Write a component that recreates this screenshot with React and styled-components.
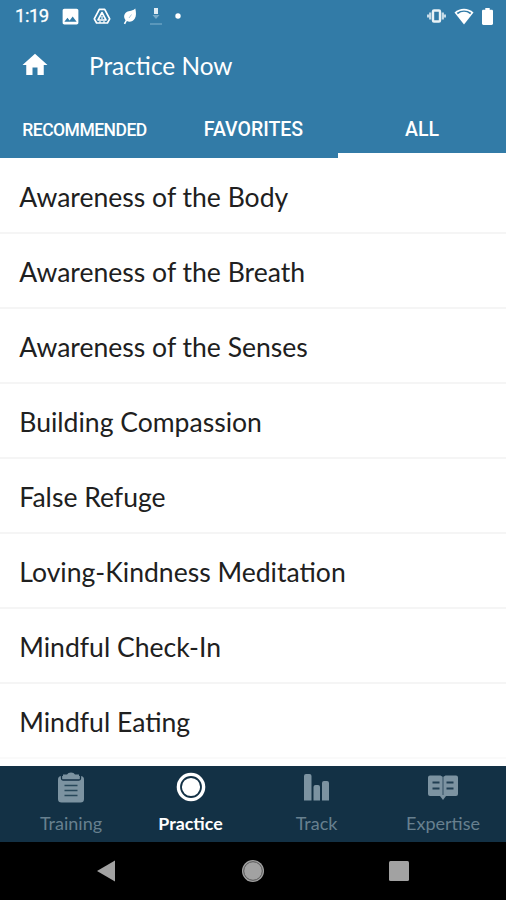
import React, { useState } from 'react';
import styled, { createGlobalStyle } from 'styled-components';
import { MdHome, MdImage, MdBatteryFull } from 'react-icons/md';

const GlobalStyle = createGlobalStyle`
  * {
    box-sizing: border-box;
  }
  body {
    margin: 0;
    font-family: Lato, 'Open Sans', sans-serif;
  }
`;

const Screen = styled.div`
  display: flex;
  flex-direction: column;
  width: 506px;
  height: 900px;
  overflow: hidden;
  background: #fff;
`;

const Header = styled.header`
  flex: none;
  height: 158px;
  background: #327ba7;
  color: #fff;
`;

const StatusBar = styled.div`
  display: flex;
  align-items: center;
  justify-content: space-between;
  height: 32px;
  padding: 0 13px 0 15px;
`;

const StatusGroup = styled.div`
  display: flex;
  align-items: center;
  gap: ${({ gap }) => gap || 0}px;

  svg {
    display: block;
  }
`;

const Clock = styled.span`
  width: 45px;
  font: 400 18.5px Roboto, sans-serif;
  letter-spacing: -0.5px;
  -webkit-text-stroke: 0.3px #fff;
`;

const TitleBar = styled.div`
  display: flex;
  align-items: center;
  height: 68px;
  padding-left: 20px;

  svg {
    display: block;
    margin-top: -3px;
  }
`;

const Title = styled.h1`
  margin: -1px 0 0 39px;
  font-size: 24.4px;
  font-weight: 400;
  line-height: 30px;
`;

const Tabs = styled.nav`
  display: grid;
  grid-template-columns: 169px 169px 168px;
  height: 58px;
`;

const Tab = styled.button`
  padding: 6px 0 0;
  border: 0;
  border-bottom: 5px solid ${({ active }) => (active ? '#fff' : 'transparent')};
  background: none;
  color: #fff;
  font: 500 ${({ size }) => size}px Roboto, sans-serif;
  letter-spacing: ${({ spacing }) => spacing || 0}px;
`;

const List = styled.ul`
  flex: 1;
  min-height: 0;
  margin: 0;
  padding: 1px 0 0;
  overflow: hidden;
  list-style: none;
`;

const Row = styled.li`
  display: flex;
  align-items: center;
  height: 74.95px;
  padding: 3px 0 0 19.3px;
  border-bottom: 2px solid #f5f5f5;
  color: #202020;
  font-size: 26.55px;
  font-weight: 400;

  &:last-child {
    border-bottom-color: #fafafa;
  }
`;

const BottomNav = styled.nav`
  flex: none;
  display: grid;
  grid-template-columns: 134px 119px 127px 126px;
  height: 76px;
  background: #133145;
`;

const NavItem = styled.button`
  display: flex;
  flex-direction: column;
  align-items: center;
  padding: 6px ${({ right }) => right || 0}px 0 ${({ left }) => left || 0}px;
  border: 0;
  background: none;
  color: ${({ active }) => (active ? '#fff' : '#67808f')};
  font-family: inherit;
  font-size: ${({ active }) => (active ? 17.8 : 18)}px;
  font-weight: ${({ active }) => (active ? 700 : 400)};
  line-height: 22px;

  svg {
    display: block;
    margin-bottom: 9px;
  }
`;

const SystemNav = styled.div`
  flex: none;
  display: flex;
  align-items: center;
  justify-content: space-between;
  height: 58px;
  padding: 0 97px 0 96px;
  background: #000;

  svg {
    display: block;
  }
`;

const DriveIcon = () => (
  <svg width="18" height="17" viewBox="0 0 18 17" fill="none" stroke="#fff" strokeLinejoin="round">
    <path d="M6.3 1.4h5.4l5 9.4-2.3 4.2H3.6L1.3 10.8z" strokeWidth="1.7" />
    <path d="M9 4.5l4 7.5H5z" strokeWidth="1.6" />
    <path d="M9 8v3M7 13v2M11 13v2" strokeWidth="1.2" />
  </svg>
);

const LeafIcon = () => (
  <svg width="14" height="17" viewBox="0 0 14 17">
    <path d="M12.3.5c.8 3.5 1.3 7.5-.6 10.3-1.8 2.7-5 3.5-7.8 2.3L2.2 16.2.8 15.5l1.8-3.3C.3 9.3.8 6 3.7 4.1 6.3 2.5 10 3 12.3.5z" fill="#fff" />
    <path d="M6 10L8.5 6.5" stroke="#8fb8d0" strokeWidth="0.8" />
  </svg>
);

const DownloadIcon = () => (
  <svg width="14" height="17" viewBox="0 0 14 17">
    <path d="M5 0h4v6H5z" fill="#e1edf4" />
    <path d="M3.5 7h7L7 11z" fill="#78aac8" />
    <path d="M1 16h12" stroke="#68a1c2" strokeWidth="1.5" />
  </svg>
);

const DotIcon = () => (
  <svg width="6" height="6" viewBox="0 0 6 6">
    <circle cx="3" cy="3" r="2.7" fill="#fff" />
  </svg>
);

const VibrateIcon = () => (
  <svg width="19" height="14" viewBox="0 0 19 14">
    <path d="M1 5.5v3M3.2 3.5v7M15.8 3.5v7M18 5.5v3" stroke="#c7dce8" strokeWidth="2.2" />
    <rect x="6" y="1.5" width="7" height="11" rx="1" fill="none" stroke="#e9f2f6" strokeWidth="2.4" />
  </svg>
);

const WifiIcon = () => (
  <svg width="20" height="17" viewBox="0 0 20 17">
    <path d="M.5 4.5C6-.5 14-.5 19.5 4.500L10 16.5z" fill="#fff" />
    <path d="M3.3 5.5c4-3 9.4-3 13.4 0" fill="none" stroke="#327ba7" strokeWidth="1.7" />
  </svg>
);

const TrainingIcon = () => (
  <svg width="26" height="31" viewBox="0 0 26 31">
    <rect x="0" y="4" width="26" height="26.5" rx="3.5" fill="#7c93a1" />
    <path d="M3.5 4v2.500q0 1.500 1.500 1.500h16q1.500 0 1.500-1.500V4" fill="none" stroke="#133145" strokeWidth="1.3" />
    <path d="M5 2.500h4Q10 .5 13 .5t4 2h4v4H5z" fill="#7c93a1" />
    <path d="M6.5 13.500h13M6.5 18.500h13M6.5 23.500h13" stroke="#27475a" strokeWidth="1.6" />
  </svg>
);

const PracticeIcon = () => (
  <svg width="30" height="31" viewBox="0 0 30 31">
    <circle cx="15" cy="15" r="14.3" fill="#fff" />
    <circle cx="15" cy="15" r="10" fill="none" stroke="#133145" strokeWidth="1.8" />
  </svg>
);

const TrackIcon = () => (
  <svg width="26" height="31" viewBox="0 0 26 31" fill="#7c93a1">
    <path d="M0 28.500V4q0-2 2-2h3.500q2 0 2 2v24.500zM9.500 28.500V15q0-2 2-2h2.500q2 0 2 2v13.500zM18 28.500V11q0-2 2-2h3q2 0 2 2v17.500z" />
  </svg>
);

const ExpertiseIcon = () => (
  <svg width="30" height="31" viewBox="0 0 30 31">
    <path d="M2 3.500h10.500L15 5l2.500-1.500H28q2 0 2 2V22q0 2-2 2H18l-3 4-3-4H2q-2 0-2-2V5.500q0-2 2-2z" fill="#7c93a1" />
    <path d="M15 5v18" stroke="#4a6577" strokeWidth="1.5" />
    <path d="M4.5 10.500h7M18.5 10.500h7M4.5 16.500h7M18.5 16.500h7" stroke="#203f53" strokeWidth="1.8" />
  </svg>
);

const tabs = [
  { name: 'RECOMMENDED', size: 17.5, spacing: -0.5 },
  { name: 'FAVORITES', size: 19.5 },
  { name: 'ALL', size: 19.5 },
];

const practices = [
  'Awareness of the Body',
  'Awareness of the Breath',
  'Awareness of the Senses',
  'Building Compassion',
  'False Refuge',
  'Loving-Kindness Meditation',
  'Mindful Check-In',
  'Mindful Eating',
];

const navItems = [
  { name: 'Training', icon: <TrainingIcon />, left: 8 },
  { name: 'Practice', icon: <PracticeIcon />, right: 6 },
  { name: 'Track', icon: <TrackIcon /> },
  { name: 'Expertise', icon: <ExpertiseIcon /> },
];

const App = () => {
  const [tab, setTab] = useState('ALL');
  const [page, setPage] = useState('Practice');

  return (
    <>
      <GlobalStyle />
      <Screen>
        <Header>
          <StatusBar>
            <StatusGroup>
              <Clock>1:19</Clock>
              <StatusGroup gap={12}>
                <MdImage size={21} />
                <DriveIcon />
                <LeafIcon />
                <DownloadIcon />
                <DotIcon />
              </StatusGroup>
            </StatusGroup>
            <StatusGroup gap={8}>
              <VibrateIcon />
              <WifiIcon />
              <svg width="11" height="17" viewBox="7 2 10 20" preserveAspectRatio="none">
                <MdBatteryFull x="0" y="0" size={24} />
              </svg>
            </StatusGroup>
          </StatusBar>
          <TitleBar>
            <MdHome size={30} />
            <Title>Practice Now</Title>
          </TitleBar>
          <Tabs>
            {tabs.map((item) => (
              <Tab
                key={item.name}
                size={item.size}
                spacing={item.spacing}
                active={tab === item.name ? 1 : 0}
                onClick={() => setTab(item.name)}
              >
                {item.name}
              </Tab>
            ))}
          </Tabs>
        </Header>
        <List>
          {practices.map((name) => (
            <Row key={name}>{name}</Row>
          ))}
        </List>
        <BottomNav>
          {navItems.map((item) => (
            <NavItem
              key={item.name}
              left={item.left}
              right={item.right}
              active={page === item.name ? 1 : 0}
              onClick={() => setPage(item.name)}
            >
              {item.icon}
              {item.name}
            </NavItem>
          ))}
        </BottomNav>
        <SystemNav>
          <svg width="20" height="22" viewBox="0 0 20 22">
            <path d="M1 11L19 .5v21z" fill="#a2a2a2" />
          </svg>
          <svg width="24" height="24" viewBox="0 0 24 24">
            <circle cx="12" cy="12" r="11" fill="#a2a2a2" />
            <circle cx="12" cy="12" r="9.3" fill="none" stroke="#555" strokeWidth="1" />
          </svg>
          <svg width="20" height="20" viewBox="0 0 20 20">
            <rect width="20" height="20" rx="1.5" fill="#a2a2a2" />
          </svg>
        </SystemNav>
      </Screen>
    </>
  );
};

export default App;
